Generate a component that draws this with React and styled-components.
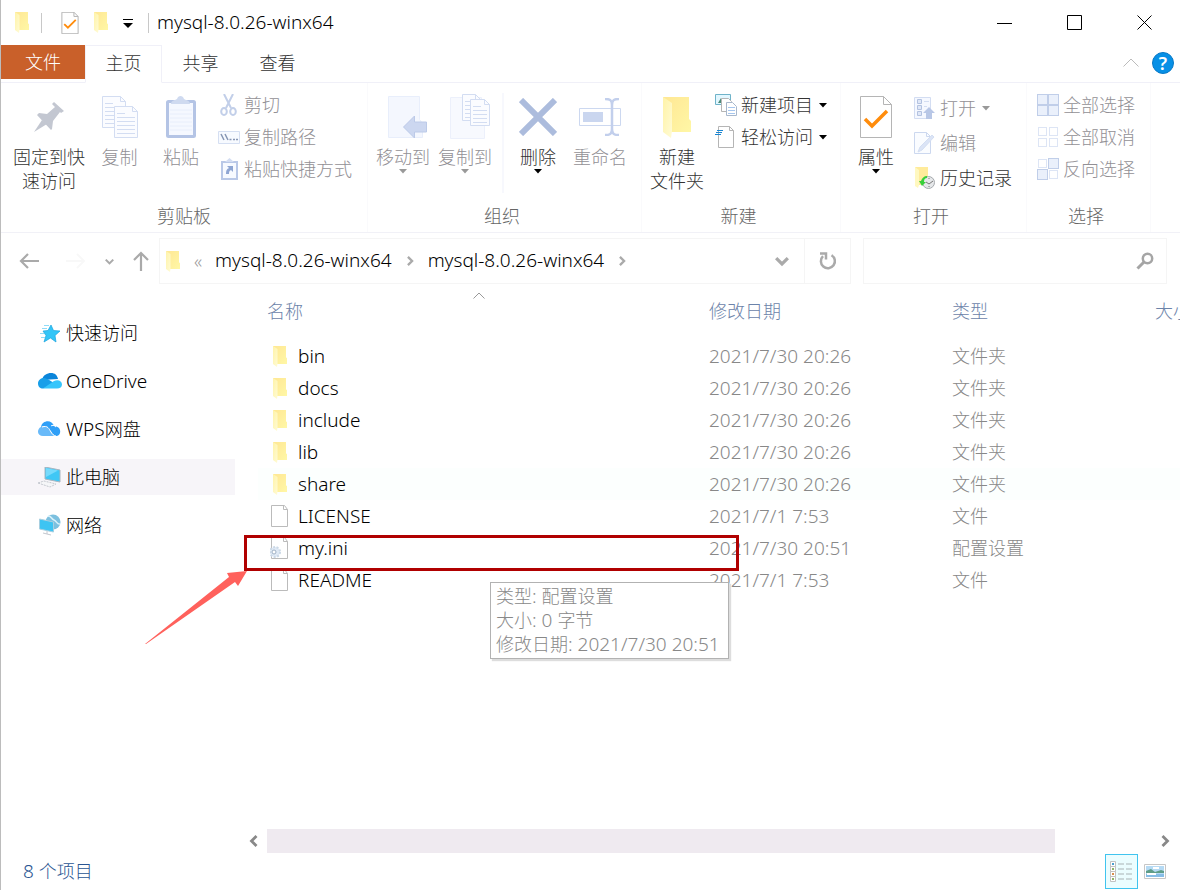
import React, { useState } from "react";
import styled, { createGlobalStyle } from "styled-components";

const folderName = "mysql-8.0.26-winx64";

const files = [
  { name: "bin", date: "2021/7/30 20:26", type: "文件夹", icon: "folder" },
  { name: "docs", date: "2021/7/30 20:26", type: "文件夹", icon: "folder" },
  { name: "include", date: "2021/7/30 20:26", type: "文件夹", icon: "folder" },
  { name: "lib", date: "2021/7/30 20:26", type: "文件夹", icon: "folder" },
  { name: "share", date: "2021/7/30 20:26", type: "文件夹", icon: "folder", hover: true },
  { name: "LICENSE", date: "2021/7/1 7:53", type: "文件", icon: "file" },
  { name: "my.ini", date: "2021/7/30 20:51", type: "配置设置", icon: "config" },
  { name: "README", date: "2021/7/1 7:53", type: "文件", icon: "file" },
];

function App() {
  const [query, setQuery] = useState("");
  const [place, setPlace] = useState("pc");

  const places = [
    { id: "quick", label: "快速访问", icon: <StarIcon /> },
    { id: "onedrive", label: <Latin>OneDrive</Latin>, icon: <OneDriveIcon /> },
    { id: "wps", label: <><Latin>WPS</Latin>网盘</>, icon: <WpsIcon /> },
    { id: "pc", label: "此电脑", icon: <PcIcon /> },
    { id: "network", label: "网络", icon: <NetworkIcon /> },
  ];

  return (
    <Window>
      <GlobalStyle />

      {/* 标题栏 */}
      <TitleBar>
        <QuickTools>
          <FolderIcon />
          <ToolDivider />
          <QuickButton aria-label="属性"><CheckFileIcon width={18} height={22} /></QuickButton>
          <QuickButton aria-label="新建文件夹"><FolderIcon /></QuickButton>
          <QuickButton aria-label="自定义快速访问工具栏">
            <svg width="10" height="10" viewBox="0 0 10 10">
              <path d="M0 1.500h10" stroke="#000" />
              <path d="M0 5h10L5 10z" fill="#000" />
            </svg>
          </QuickButton>
          <ToolDivider />
        </QuickTools>
        <Title>{folderName}</Title>
        <WindowButton aria-label="最小化">
          <svg width="16" height="16"><path d="M0 8.500h15" stroke="#000" /></svg>
        </WindowButton>
        <WindowButton aria-label="最大化">
          <svg width="16" height="16"><path d="M.5.5h14v14H.5z" fill="none" stroke="#000" /></svg>
        </WindowButton>
        <WindowButton aria-label="关闭">
          <svg width="16" height="16"><path d="M.5.5l14 14M14.500.5l-14 14" stroke="#000" /></svg>
        </WindowButton>
      </TitleBar>

      {/* 选项卡 */}
      <Tabs>
        <FileTab>文件</FileTab>
        <Tab $active>主页</Tab>
        <Tab>共享</Tab>
        <Tab>查看</Tab>
        <TabTools>
          <IconButton aria-label="最小化功能区">
            <svg width="16" height="9" viewBox="0 0 16 9"><path d="M.5 8.500L8 1l7.500 7.500" fill="none" stroke="#bbb" /></svg>
          </IconButton>
          <HelpButton aria-label="帮助">?</HelpButton>
        </TabTools>
      </Tabs>

      {/* 功能区 */}
      <Ribbon>
        <Group $width={367}>
          <GroupBody $indent={8}>
            <BigButton $width={80}><BigIcon><PinIcon /></BigIcon>固定到快<br />速访问</BigButton>
            <BigButton $width={61} disabled><BigIcon><CopyIcon /></BigIcon>复制</BigButton>
            <BigButton $width={62} disabled><BigIcon><PasteIcon /></BigIcon>粘贴</BigButton>
            <SmallList>
              <SmallButton disabled><SmallIcon><ScissorsIcon /></SmallIcon>剪切</SmallButton>
              <SmallButton disabled><SmallIcon><PathIcon /></SmallIcon>复制路径</SmallButton>
              <SmallButton disabled><SmallIcon><ShortcutIcon /></SmallIcon>粘贴快捷方式</SmallButton>
            </SmallList>
          </GroupBody>
          <GroupLabel>剪贴板</GroupLabel>
        </Group>

        <Group $width={274}>
          <GroupBody $indent={4}>
            <BigButton $width={62} disabled><BigIcon><MoveIcon /></BigIcon>移动到<Caret color="#999" /></BigButton>
            <BigButton $width={62} disabled><BigIcon><CopyToIcon /></BigIcon>复制到<Caret color="#999" /></BigButton>
            <InnerDivider />
            <BigButton $width={62}><BigIcon><DeleteIcon /></BigIcon>删除<Caret /></BigButton>
            <BigButton $width={62} disabled><BigIcon><RenameIcon /></BigIcon>重命名</BigButton>
          </GroupBody>
          <GroupLabel $shift>组织</GroupLabel>
        </Group>

        <Group $width={199}>
          <GroupBody>
            <BigButton $width={70}><BigIcon><FolderIcon width={28} height={41} /></BigIcon>新建<br />文件夹</BigButton>
            <SmallList $tight>
              <SmallButton><SmallIcon><NewItemIcon /></SmallIcon>新建项目<Caret /></SmallButton>
              <SmallButton><SmallIcon><EasyAccessIcon /></SmallIcon>轻松访问<Caret /></SmallButton>
            </SmallList>
          </GroupBody>
          <GroupLabel $shift>新建</GroupLabel>
        </Group>

        <Group $width={186}>
          <GroupBody>
            <BigButton $width={70}><BigIcon><CheckFileIcon width={32} height={42} /></BigIcon>属性<Caret /></BigButton>
            <SmallList $tight $tall>
              <SmallButton disabled><SmallIcon><OpenIcon /></SmallIcon>打开<Caret color="#999" /></SmallButton>
              <SmallButton disabled><SmallIcon><EditIcon /></SmallIcon>编辑</SmallButton>
              <SmallButton><SmallIcon><HistoryIcon /></SmallIcon>历史记录</SmallButton>
            </SmallList>
          </GroupBody>
          <GroupLabel $shift>打开</GroupLabel>
        </Group>

        <Group $width={124}>
          <GroupBody $indent={4}>
            <SmallList>
              <SmallButton disabled><SmallIcon><SelectIcon cells={[1, 1, 1, 1]} /></SmallIcon>全部选择</SmallButton>
              <SmallButton disabled><SmallIcon><SelectIcon cells={[0, 0, 0, 0]} /></SmallIcon>全部取消</SmallButton>
              <SmallButton disabled><SmallIcon><SelectIcon cells={[0, 1, 1, 0]} /></SmallIcon>反向选择</SmallButton>
            </SmallList>
          </GroupBody>
          <GroupLabel $shift>选择</GroupLabel>
        </Group>
      </Ribbon>

      {/* 地址栏 */}
      <Navigation>
        <NavButtons>
          <BackButton aria-label="后退">
            <svg width="20" height="16" viewBox="0 0 20 16"><path d="M9 1L2 8l7 7M2 8h18" fill="none" stroke="#aaa" strokeWidth="2.200" /></svg>
          </BackButton>
          <IconButton aria-label="前进" disabled>
            <svg width="20" height="16" viewBox="0 0 20 16"><path d="M11 1l7 7-7 7M18 8H0" fill="none" stroke="#f8f8f8" strokeWidth="2" /></svg>
          </IconButton>
          <IconButton aria-label="最近浏览的位置"><Chevron size={9} /></IconButton>
          <IconButton aria-label="上移">
            <svg width="16" height="20" viewBox="0 0 16 20"><path d="M1 9l7-7 7 7M8 2v18" fill="none" stroke="#aaa" strokeWidth="2.200" /></svg>
          </IconButton>
        </NavButtons>
        <Address>
          <FolderIcon />
          <Crumbs>
            <More>«</More>
            <Crumb href="#parent">{folderName}</Crumb>
            <Chevron turn={-90} />
            <Crumb href="#current">{folderName}</Crumb>
            <Chevron turn={-90} />
          </Crumbs>
          <IconButton aria-label="以前的位置"><Chevron size={14} /></IconButton>
          <RefreshButton aria-label="刷新">
            <svg width="18" height="18" viewBox="0 0 18 18">
              <path d="M12.500 3.200A7 7 0 1 1 4 4.200" fill="none" stroke="#aaa" strokeWidth="2.500" />
              <path d="M1 1.500h6v6" fill="none" stroke="#aaa" strokeWidth="2.500" />
            </svg>
          </RefreshButton>
        </Address>
        <Search>
          <SearchInput aria-label="搜索" value={query} onChange={(e) => setQuery(e.target.value)} />
          <svg width="18" height="18" viewBox="0 0 18 18" fill="none" stroke="#a5a5a5">
            <circle cx="11.500" cy="6.500" r="4.700" strokeWidth="2.500" />
            <path d="M8 10l-6.500 6.500" strokeWidth="3" />
          </svg>
        </Search>
      </Navigation>

      <Body>
        <Sidebar>
          {places.map((item) => (
            <Place key={item.id} $active={place === item.id} onClick={() => setPlace(item.id)}>
              <PlaceIcon>{item.icon}</PlaceIcon>
              <span>{item.label}</span>
            </Place>
          ))}
        </Sidebar>

        <Main>
          <ListArea>
            <FileTable>
              <colgroup>
                <col width="442" />
                <col width="243" />
                <col width="203" />
                <col width="120" />
              </colgroup>
              <thead>
                <tr>
                  <HeadCell>
                    <SortMark>
                      <svg width="12" height="7" viewBox="0 0 12 7"><path d="M.5 6.500L6 1l5.500 5.500" fill="none" stroke="#999" /></svg>
                    </SortMark>
                    名称
                  </HeadCell>
                  <HeadCell>修改日期</HeadCell>
                  <HeadCell>类型</HeadCell>
                  <HeadCell>大小</HeadCell>
                </tr>
              </thead>
              <tbody>
                {files.map((file) => (
                  <FileRow key={file.name} $hover={file.hover}>
                    <Cell>
                      <FileName>
                        <FileIconBox>
                          {file.icon === "folder" ? <FolderIcon /> : <DocIcon gear={file.icon === "config"} />}
                        </FileIconBox>
                        {file.name}
                      </FileName>
                    </Cell>
                    <Cell><Latin>{file.date}</Latin></Cell>
                    <Cell>{file.type}</Cell>
                    <Cell />
                  </FileRow>
                ))}
              </tbody>
            </FileTable>

            <Highlight />
            <Tooltip role="tooltip">
              <div>类型<Latin>: </Latin>配置设置</div>
              <div>大小<Latin>: 0 </Latin>字节</div>
              <div>修改日期<Latin>: 2021/7/30 20:51</Latin></div>
            </Tooltip>
          </ListArea>

          <ScrollBar>
            <IconButton aria-label="向左滚动"><Chevron turn={90} size={12} color="#888" /></IconButton>
            <ScrollTrack><ScrollThumb /></ScrollTrack>
            <IconButton aria-label="向右滚动"><Chevron turn={-90} size={12} color="#888" /></IconButton>
          </ScrollBar>
        </Main>

        <Arrow width="102" height="75" viewBox="0 0 102 75">
          <path d="M0 73L84 6l-2-4L102 0 93 15l-3-4L1 73z" fill="#ff615c" />
        </Arrow>
      </Body>

      {/* 状态栏 */}
      <StatusBar>
        <ItemCount><Latin>8 </Latin>个项目</ItemCount>
        <ViewButtons>
          <ViewButton aria-label="详细信息" $active><DetailsIcon /></ViewButton>
          <ViewButton aria-label="大缩略图"><ThumbIcon /></ViewButton>
        </ViewButtons>
      </StatusBar>
    </Window>
  );
}

export default App;

/* ---------- 图标 ---------- */

function FolderIcon({ width = 14, height = 21 }) {
  return (
    <svg width={width} height={height} viewBox="0 0 28 41" preserveAspectRatio="none">
      <defs>
        <linearGradient id="folderBack" x1="0" y1="0" x2="1" y2="1">
          <stop offset="0" stopColor="#ffe794" />
          <stop offset="1" stopColor="#fff7a6" />
        </linearGradient>
        <linearGradient id="folderFlap" x1="0" y1="0" x2="1" y2="1">
          <stop offset="0" stopColor="#fff3a8" />
          <stop offset="1" stopColor="#fffbd5" />
        </linearGradient>
      </defs>
      <path d="M0 0h26v22l2 2v11H6z" fill="url(#folderBack)" />
      <path d="M0 0l9 6v28l-1 7-8-6z" fill="url(#folderFlap)" />
    </svg>
  );
}

function CheckFileIcon({ width, height }) {
  return (
    <svg width={width} height={height} viewBox="0 0 32 42" fill="none">
      <path d="M.5.500h23l8 8v33H.5z" fill="#fff" stroke="#b5b5b5" vectorEffect="non-scaling-stroke" />
      <path d="M23.500.500v8h8" stroke="#b5b5b5" vectorEffect="non-scaling-stroke" />
      <path d="M5 23l7 7 15-15" stroke="#ff8c0c" strokeWidth="3.500" />
    </svg>
  );
}

function DocIcon({ gear }) {
  return (
    <svg width="20" height="22" viewBox="0 0 20 22" fill="none">
      <path d="M1.500.500h13l3 4v17h-16z" fill="#fff" stroke="#bbb" />
      <path d="M13.500.500v4h4" stroke="#bbb" />
      {gear && (
        <>
          <circle cx="5" cy="15" r="5" fill="#dfe9f5" stroke="#cbd8e6" strokeWidth="2" strokeDasharray="2 1.500" />
          <circle cx="4" cy="15" r="2" fill="#fff" stroke="#9fb1c4" />
        </>
      )}
    </svg>
  );
}

function Caret({ color = "#000" }) {
  return <CaretSvg width="8" height="5" viewBox="0 0 8 5"><path d="M0 0h8L4 4.500z" fill={color} /></CaretSvg>;
}

function Chevron({ turn = 0, size = 10, color = "#aaa" }) {
  return (
    <svg width={size} height={size} viewBox="0 0 12 12">
      <path d="M1 3.500l5 5 5-5" transform={`rotate(${turn} 6 6)`} fill="none" stroke={color} strokeWidth="2.800" />
    </svg>
  );
}

function PinIcon() {
  return (
    <svg width="32" height="32" viewBox="0 0 32 32" fill="#c3c7d1">
      <path d="M21 1l10 9-3 2-1-1-7 9-1 8-1 1L4 14l2-2 8 1 8-7-3-3z" />
      <path d="M9 19l5 4L1 31z" />
    </svg>
  );
}

function Sheet({ x, y, w = 24, h = 32 }) {
  const lines = [];
  for (let i = 11; i < h - 3; i += 4) {
    lines.push(<path key={i} d={`M3 ${i}.5h${w - 6}`} />);
  }
  return (
    <g transform={`translate(${x} ${y})`} stroke="#d3ddf2" fill="none">
      <path d={`M.5.500h${w - 6}l5 5v${h - 6}H.5z`} fill="#fbfcff" />
      <path d={`M${w - 5.5}.500v5h5M3 7.500h8`} />
      {lines}
    </g>
  );
}

function CopyIcon() {
  return (
    <svg width="36" height="42" viewBox="0 0 36 42">
      <Sheet x={0} y={0} />
      <Sheet x={12} y={10} />
    </svg>
  );
}

function PasteIcon() {
  return (
    <svg width="32" height="43" viewBox="0 0 32 43">
      <rect x="2.500" y="5.500" width="27" height="35" rx="1" fill="#f5f8ff" stroke="#b4c4e5" strokeWidth="3" />
      <path d="M5 14h22M5 18h22M5 22h22M5 26h22M5 30h22M5 34h22" stroke="#e8eefb" />
      <path d="M6 8c0-4 5-4 6-5 1-4 6-4 7 0 1 1 6 1 6 5z" fill="#cfdaf0" />
    </svg>
  );
}

function ScissorsIcon() {
  return (
    <svg width="18" height="22" viewBox="0 0 18 22" fill="none" stroke="#c2cfe9" strokeWidth="2">
      <path d="M4 0l7 14M13 0L6 14" />
      <ellipse cx="4" cy="17.500" rx="2.800" ry="3.500" />
      <ellipse cx="13" cy="17.500" rx="2.800" ry="3.500" />
    </svg>
  );
}

function PathIcon() {
  return (
    <svg width="22" height="13" viewBox="0 0 22 13" fill="none">
      <path d="M.5.500h21v12H.5z" fill="#f7faff" stroke="#d5dff2" />
      <path d="M3 3l3 6M7 3l3 6M11.500 8.500h2M15 8.500h2M18 8.500h2" stroke="#8796b4" strokeWidth="1.500" />
    </svg>
  );
}

function ShortcutIcon() {
  return (
    <svg width="17" height="22" viewBox="0 0 17 22">
      <rect x="1" y="4" width="15" height="17" fill="#f7faff" stroke="#b9c8e7" strokeWidth="2" />
      <path d="M4 4l4.500-4L13 4z" fill="#d3ddf2" />
      <path d="M6 8h6v6l-2-2c-2 1-2 2-2 4H5c0-4 1-5 3-6z" fill="#8fa6d3" />
    </svg>
  );
}

function MoveIcon() {
  return (
    <svg width="50" height="43" viewBox="-10 0 50 43">
      <path d="M.5.500h31v23l3 4v14H.5z" fill="#f4f7fe" stroke="#e8eefb" />
      <path d="M15.500 31l11-11v6h12v10h-12v6z" fill="#ccd7f0" stroke="#bccae8" />
    </svg>
  );
}

function CopyToIcon() {
  return (
    <svg width="50" height="47" viewBox="-10 0 50 47">
      <path d="M.5 3.500h31v23l3 4v14H.5z" fill="#f7f9fe" stroke="#ecf0fb" />
      <Sheet x={12} y={0} w={19} h={27} />
      <Sheet x={20} y={5} w={20} h={27} />
    </svg>
  );
}

function DeleteIcon() {
  return (
    <svg width="38" height="38" viewBox="0 0 38 38">
      <path d="M2 2l34 34M36 2L2 36" stroke="#acbcdd" strokeWidth="6" />
    </svg>
  );
}

function RenameIcon() {
  return (
    <svg width="43" height="38" viewBox="0 0 43 38" fill="none">
      <path d="M.500 10.500h41v17H.5z" fill="#fff" stroke="#ccd8f0" />
      <path d="M4 14h20v10H4z" fill="#cad6ef" />
      <path d="M26 1c5 0 7 1 7 6v24c0 5-2 6-7 6M40 1c-5 0-7 1-7 6v24c0 5 2 6 7 6" stroke="#c2cfec" strokeWidth="2.500" />
    </svg>
  );
}

function NewItemIcon() {
  return (
    <svg width="22" height="22" viewBox="0 0 22 22">
      <path d="M.5.500h15v10H.5z" fill="#e2f7ff" stroke="#6fb3c9" />
      <path d="M3 9l3-5 2 5z" fill="#4d8a77" />
      <path d="M6.500 4.500h7l3 3v10h-10z" fill="#fff" stroke="#b5b5b5" />
      <path d="M11.500 8.500h6l4 4v9h-10z" fill="#fff" stroke="#a9b8cc" />
      <path d="M13 13.500h7M13 16.500h7M13 19.500h7" stroke="#a6c6ee" />
    </svg>
  );
}

function EasyAccessIcon() {
  return (
    <svg width="22" height="22" viewBox="0 0 22 22" fill="none">
      <path d="M3.500.500h11l4 4v17h-15z" fill="#fff" stroke="#b5b5b5" />
      <path d="M14.500.500v4h4" stroke="#b5b5b5" />
      <path d="M2 4.500h6M1 6.500h6M0 8.500h6" stroke="#1c86d1" />
    </svg>
  );
}

function OpenIcon() {
  return (
    <svg width="22" height="22" viewBox="0 0 22 22" fill="none">
      <path d="M.5.500h16v21H.5z" fill="#f5f8ff" stroke="#d3ddf2" />
      <path d="M3.500 2.500h4v4h-4zM3.500 8.500h4v4h-4zM3.500 14.500h4v4h-4z" fill="#dfe7f7" stroke="#b3c2e0" />
      <path d="M10 4.500h5M10 9.500h3" stroke="#d3ddf2" />
      <path d="M15 10l6 6h-3v6h-6v-6H9z" fill="#b8c7e6" />
    </svg>
  );
}

function EditIcon() {
  return (
    <svg width="22" height="22" viewBox="0 0 22 22" fill="none">
      <path d="M.5.500h12l4 4v17H.5z" fill="#fafcff" stroke="#ccd8ef" />
      <path d="M12.500.500v4h4" stroke="#ccd8ef" />
      <path d="M4 20l2-5L18 3l2 2L8 18z" fill="#dbe4f6" stroke="#d3def2" />
    </svg>
  );
}

function HistoryIcon() {
  return (
    <svg width="22" height="22" viewBox="0 0 22 22">
      <path d="M1 0h13v18H4z" fill="#ffeb9b" />
      <path d="M1 0l4 3v15l-1 3-3-2z" fill="#fff8c0" />
      <circle cx="14.500" cy="15.500" r="6" fill="#e6e8ea" stroke="#a5a9ad" />
      <path d="M12 15l3 2 4-3M15 11v1M15 19v1" fill="none" stroke="#777" />
      <path d="M13 9c-3 0-5 2-6 5H5l3 5 4-4h-2c0-3 1-4 3-4z" fill="#38cf3b" />
    </svg>
  );
}

function SelectIcon({ cells }) {
  return (
    <svg width="22" height="22" viewBox="0 0 22 22">
      {cells.map((on, i) => {
        const x = (i % 2) * 11;
        const y = i > 1 ? 11 : 0;
        const inset = on ? 0.5 : 1.5;
        const side = on ? 10 : 8;
        return (
          <rect key={i} x={x + inset} y={y + inset} width={side} height={side}
            fill={on ? "#eaf0fb" : "#fff"} stroke={on ? "#c0cee9" : "#dde5f5"} />
        );
      })}
    </svg>
  );
}

function StarIcon() {
  return (
    <svg width="20" height="19" viewBox="0 0 20 19">
      <path d="M11 1l2.500 5.500L20 7l-5 4.500 1 6.500-5.500-4L4 18l2-6.500L3 7l5-.500z" fill="#32c5f7" stroke="#1aa3de" strokeWidth=".7" />
      <path d="M4 1.500h5M2 4.500h5M0 9.500h4M1 13.500h4" stroke="#8fdcf8" />
    </svg>
  );
}

function OneDriveIcon() {
  return (
    <svg width="24" height="16" viewBox="0 0 24 16">
      <path d="M4 7C5 2 9 0 13 0c4 0 6 2 7 6z" fill="#0b85da" />
      <path d="M0 10.500C0 7 3 5 6 5c3 0 8 4 12 6L5 15.500C2 15.500 0 13.500 0 10.500z" fill="#189fe9" />
      <path d="M5 15.500L16 8c4-2 8 0 8 3.500 0 2.500-2 4-5 4z" fill="#36c5fb" />
    </svg>
  );
}

function WpsIcon() {
  return (
    <svg width="23" height="16" viewBox="0 0 23 16">
      <path d="M3 6c1-7 11-8 13-1 4 0 7 3 6 7-1 3-3 3-5 3L6 5z" fill="#2f9ff7" />
      <path d="M0 11c0-6 7-8 11-3l6 7H5c-3 0-5-2-5-4z" fill="#69baf9" />
      <path d="M4 6c6-2 7 2 9 5 1 2 3 4 5 4M13 5c1-1 3-1 5 1" fill="none" stroke="#fff" />
    </svg>
  );
}

function PcIcon() {
  return (
    <svg width="23" height="21" viewBox="0 0 23 21">
      <path d="M7 0l15 3v12L7 12z" fill="#3fc7f5" stroke="#a9b6c1" />
      <path d="M8 1l12 2.500L8 10z" fill="#76dafb" />
      <path d="M0 16l6-2 12 3-6 3z" fill="#f5f6f8" stroke="#c4c8cf" strokeDasharray="2 1" />
    </svg>
  );
}

function NetworkIcon() {
  return (
    <svg width="22" height="22" viewBox="0 0 22 22">
      <circle cx="14" cy="8" r="7.500" fill="#7cc0df" />
      <path d="M9 2c4 0 3 3 6 4s3 5 6 4" stroke="#d8f1fa" fill="none" strokeWidth="1.500" />
      <path d="M.5 5l14 3v10l-14-3z" fill="#3ec4f2" stroke="#a7cfe0" />
      <path d="M4 19l8 2M8 17v3" stroke="#c4c8cf" />
    </svg>
  );
}

function DetailsIcon() {
  return (
    <svg width="23" height="22" viewBox="0 0 23 22" fill="none">
      <path d="M.5.500h5v5h-5zM.500 5.500h5v5h-5zM.500 10.500h5v5h-5zM.500 15.500h5v5h-5z" fill="#fff" stroke="#c2c2c2" />
      <path d="M2 3h2" stroke="#4a9fd0" strokeWidth="2" />
      <path d="M2 8h2M2 18h2" stroke="#8fb36a" strokeWidth="2" />
      <path d="M2 13h2" stroke="#d98e4d" strokeWidth="2" />
      <path d="M8 3h6M16 3h6M8 8h6M16 8h6M8 13h6M16 13h6M8 18h6M16 18h6" stroke="#a9b3b5" />
    </svg>
  );
}

function ThumbIcon() {
  return (
    <svg width="22" height="15" viewBox="0 0 22 15">
      <path d="M.5.500h21v14H.5z" fill="#fff" stroke="#c6c6c6" />
      <path d="M2 2h18v11H2z" fill="#b5daf4" />
      <path d="M2 7l5-2 4 3 6-2 3 1v2H2z" fill="#5e9d88" />
      <path d="M2 10h18v3H2z" fill="#86bde6" />
      <path d="M9 4h6M3 10h9" stroke="#fff" strokeWidth="2" />
    </svg>
  );
}

/* ---------- 样式 ---------- */

const GlobalStyle = createGlobalStyle`
  * {
    box-sizing: border-box;
  }

  body {
    margin: 0;
    background: #fff;
    font-family: "Noto Sans", "Noto Sans CJK SC", sans-serif;
    font-weight: 300;
    font-size: 18px;
    line-height: 24px;
    color: #000;
  }

  button,
  input {
    font: inherit;
    color: inherit;
    border: none;
    background: none;
    padding: 0;
  }

  svg {
    display: block;
    flex-shrink: 0;
  }
`;

/* 西文字符比中文大一号 */
const Latin = styled.span`
  font-size: 19px;
  white-space: pre;
`;

const Window = styled.div`
  display: flex;
  flex-direction: column;
  min-height: 100vh;
  border-left: 1px solid #bcbcbc;
  overflow: hidden;
`;

const TitleBar = styled.header`
  display: flex;
  align-items: center;
  height: 45px;
`;

const QuickTools = styled.div`
  display: flex;
  align-items: center;
  gap: 15px;
  padding-left: 14px;
`;

const ToolDivider = styled.span`
  width: 1px;
  height: 20px;
  margin: 0 4px 0 -3px;
  background: #c8c8c8;

  &:last-child {
    margin: 0;
  }
`;

const QuickButton = styled.button`
  display: flex;
`;

const Title = styled.h1`
  flex: 1;
  margin: 0;
  padding: 0 0 2px 8px;
  font-size: 19px;
  font-weight: 300;
`;

const WindowButton = styled.button`
  display: flex;
  align-items: center;
  justify-content: center;
  width: 70px;
  height: 45px;
`;

const Tabs = styled.nav`
  display: flex;
  height: 38px;
  border-bottom: 1px solid #f0f0f8;
  color: #333;
`;

const Tab = styled.button`
  width: 77px;
  height: 38px;
  padding-bottom: 2px;
  border: 1px solid ${(props) => (props.$active ? "#f0f0f8" : "transparent")};
  border-bottom-color: ${(props) => (props.$active ? "#fff" : "transparent")};
`;

const FileTab = styled.button`
  width: 84px;
  height: 34px;
  background: #c9602a;
  color: #fff;
`;

const TabTools = styled.div`
  display: flex;
  align-items: center;
  gap: 13px;
  margin-left: auto;
  padding: 0 6px 2px 0;
`;

const IconButton = styled.button`
  display: flex;
  align-items: center;
  justify-content: center;
`;

const BackButton = styled(IconButton)`
  padding-right: 8px;
`;

const HelpButton = styled.button`
  width: 22px;
  height: 22px;
  border-radius: 50%;
  background: #0790e6;
  border: 1px solid #0878c6;
  color: #fff;
  font-weight: 600;
  line-height: 20px;
`;

const Ribbon = styled.section`
  display: flex;
  height: 150px;
  border-bottom: 1px solid #f1f1f7;
`;

const Group = styled.div`
  display: flex;
  flex-direction: column;
  width: ${(props) => props.$width}px;
  flex-shrink: 0;
  border-right: 1px solid #fafafc;
`;

const GroupBody = styled.div`
  display: flex;
  flex: 1;
  padding: 6px 0 0 ${(props) => props.$indent || 0}px;
`;

const GroupLabel = styled.div`
  height: 28px;
  padding-right: ${(props) => (props.$shift ? 5 : 0)}px;
  text-align: center;
  color: #666;
`;

const BigButton = styled.button`
  display: flex;
  flex-direction: column;
  align-items: center;
  width: ${(props) => props.$width}px;
  color: ${(props) => (props.disabled ? "#929095" : "#333")};
  white-space: nowrap;
`;

const BigIcon = styled.span`
  display: flex;
  align-items: center;
  height: 56px;
`;

const CaretSvg = styled.svg`
  margin: 0 2px;
`;

const InnerDivider = styled.span`
  width: 2px;
  height: 100px;
  margin: 4px 3px 0 6px;
  background: #f7f8fd;
`;

const SmallList = styled.div`
  display: flex;
  flex-direction: column;
  gap: ${(props) => (props.$tall ? 11 : 8)}px;
  padding: ${(props) => (props.$tall ? 7 : 4)}px 0 0 ${(props) => (props.$tight ? 3 : 6)}px;
`;

const SmallButton = styled.button`
  display: flex;
  align-items: center;
  gap: 4px;
  height: 24px;
  color: ${(props) => (props.disabled ? "#929095" : "#333")};
  white-space: nowrap;
`;

const SmallIcon = styled.span`
  display: flex;
  justify-content: center;
  width: 22px;
`;

const Navigation = styled.section`
  display: flex;
  gap: 12px;
  padding: 5px 13px 6px 0;
`;

const NavButtons = styled.div`
  display: flex;
  align-items: center;
  gap: 19px;
  padding-left: 18px;
  margin-right: -2px;
`;

const Address = styled.div`
  display: flex;
  align-items: center;
  flex: 1;
  height: 46px;
  padding-left: 6px;
  border: 1px solid #f5f5f5;
`;

const Crumbs = styled.div`
  display: flex;
  align-items: center;
  gap: 13px;
  flex: 1;
  padding-left: 14px;
`;

const More = styled.span`
  color: #999;
`;

const Crumb = styled.a`
  padding-bottom: 2px;
  color: #000;
  font-size: 19px;
  text-decoration: none;
`;

const RefreshButton = styled.button`
  display: flex;
  align-items: center;
  justify-content: center;
  width: 46px;
  height: 44px;
  margin-left: 15px;
  border-left: 1px solid #f5f5f5;
`;

const Search = styled.label`
  display: flex;
  align-items: center;
  width: 304px;
  padding: 0 12px;
  border: 1px solid #f5f5f5;
`;

const SearchInput = styled.input`
  flex: 1;
  min-width: 0;
  outline: none;
`;

const Body = styled.div`
  position: relative;
  display: flex;
  flex: 1;
`;

const Sidebar = styled.aside`
  display: flex;
  flex-direction: column;
  gap: 12px;
  width: 234px;
  flex-shrink: 0;
  padding-top: 25px;
`;

const Place = styled.button`
  display: flex;
  align-items: center;
  gap: 4px;
  height: 36px;
  padding-left: 36px;
  background: ${(props) => (props.$active ? "#f7f5f9" : "transparent")};
`;

const PlaceIcon = styled.span`
  display: flex;
  justify-content: center;
  width: 25px;
`;

const Main = styled.main`
  display: flex;
  flex-direction: column;
  flex: 1;
  min-width: 0;
`;

const ListArea = styled.div`
  position: relative;
  flex: 1;
  padding-left: 23px;
  overflow: hidden;
`;

const FileTable = styled.table`
  width: 1008px;
  table-layout: fixed;
  border-collapse: collapse;
`;

const HeadCell = styled.th`
  position: relative;
  height: 50px;
  padding: 0 9px 8px;
  color: #6c83a9;
  font-weight: 300;
  text-align: left;
`;

const SortMark = styled.span`
  position: absolute;
  top: 2px;
  left: 50%;
  transform: translateX(-50%);
`;

const FileRow = styled.tr`
  height: 32px;
  background: ${(props) => (props.$hover ? "#fcfffe" : "transparent")};
`;

const Cell = styled.td`
  padding: 0 9px;
  color: #888;
`;

const FileName = styled.span`
  display: flex;
  align-items: center;
  gap: 8px;
  color: #000;
  font-size: 19px;
`;

const FileIconBox = styled.span`
  display: flex;
  justify-content: center;
  width: 23px;
  padding-left: 2px;
`;

const Highlight = styled.div`
  position: absolute;
  top: 245px;
  left: 9px;
  width: 495px;
  height: 36px;
  border: 3px solid #b00000;
`;

const Tooltip = styled.div`
  position: absolute;
  top: 292px;
  left: 255px;
  padding: 1px 8px 2px 5px;
  border: 1px solid #b2b2b2;
  background: #fff;
  box-shadow: 2px 2px 1px #ddd;
  color: #888;
  white-space: nowrap;
`;

const Arrow = styled.svg`
  position: absolute;
  top: 281px;
  left: 144px;
`;

const ScrollBar = styled.div`
  display: flex;
  align-items: center;
  gap: 7px;
  height: 24px;
  padding: 0 9px 0 13px;
`;

const ScrollTrack = styled.div`
  flex: 1;
  height: 24px;
`;

const ScrollThumb = styled.div`
  width: 89%;
  height: 24px;
  background: #efeaf0;
`;

const StatusBar = styled.footer`
  display: flex;
  align-items: center;
  justify-content: space-between;
  height: 37px;
  padding: 0 9px 0 22px;
  color: #2a5592;
`;

const ItemCount = styled.span`
  padding-bottom: 2px;
`;

const ViewButtons = styled.div`
  display: flex;
`;

const ViewButton = styled.button`
  display: flex;
  align-items: center;
  justify-content: center;
  width: 33px;
  height: 35px;
  border: 1px solid ${(props) => (props.$active ? "#40c4ef" : "transparent")};
  background: ${(props) => (props.$active ? "#ebfdff" : "transparent")};
`;
